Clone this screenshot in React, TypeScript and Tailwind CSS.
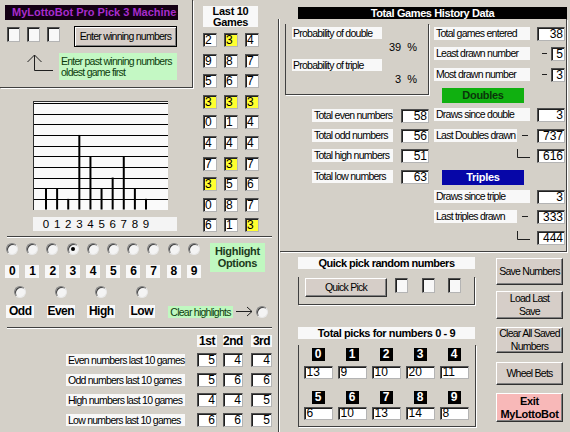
import React from "react";

const BASEF = "font-['Liberation_Sans',Arial,sans-serif] text-[10.5px] tracking-[-0.75px]";
const BOLDF = "font-['Liberation_Sans',Arial,sans-serif] font-bold";
const SUNKEN =
  "border border-t-[#505050] border-l-[#505050] border-r-[#b4b4b4] border-b-[#b4b4b4] shadow-[inset_1px_1px_0_#202020]";
const BTN =
  "bg-[#d6cec8] border border-t-white border-l-white border-r-[#303030] border-b-[#303030] shadow-[inset_-1px_-1px_0_#808080] flex flex-col items-center justify-center text-center leading-[13px]";
const LBL = "bg-[#f8f8f8]";
const FRAME3 = "border-l border-r border-b border-[#404040] shadow-[1px_1px_0_#ffffff]";

function Radio({ checked = false }: { checked?: boolean }) {
  return (
    <div className="w-[12px] h-[12px] shrink-0 rounded-full bg-[#f4f4f4] border border-t-[#808080] border-l-[#808080] border-r-[#e8e8e8] border-b-[#e8e8e8] shadow-[inset_1px_1px_0_#404040] flex items-center justify-center">
      {checked && <div className="w-[4px] h-[4px] rounded-full bg-black" />}
    </div>
  );
}

const last10 = [
  [2, 3, 4],
  [9, 8, 7],
  [5, 6, 7],
  [3, 3, 3],
  [0, 1, 4],
  [4, 4, 4],
  [7, 3, 7],
  [3, 5, 6],
  [0, 8, 7],
  [6, 1, 3],
];
const counts = [2, 2, 1, 7, 5, 2, 3, 5, 2, 1];

function Chart() {
  const base = 107.5;
  const unit = 10.65;
  return (
    <svg width="134" height="108" className="block">
      {Array.from({ length: 10 }).map((_, k) => {
        const y = Math.round(base - unit * (k + 1)) + 0.5;
        return <line key={k} x1="0" x2="134" y1={y} y2={y} stroke="#000" strokeWidth="1" />;
      })}
      {counts.map((c, i) => {
        const x = 12 + i * 11.11;
        return <line key={i} x1={x} x2={x} y1={base} y2={base - c * unit} stroke="#000" strokeWidth="2" />;
      })}
    </svg>
  );
}

function Val({ v, w, align = "right" }: { v: string | number; w: string; align?: string }) {
  return (
    <div
      className={`${w} h-[14px] shrink-0 bg-white ${SUNKEN} text-[12px] leading-[12px] tracking-normal ${
        align === "right" ? "text-right pr-[1px]" : "text-left pl-[2px]"
      }`}
    >
      {v}
    </div>
  );
}

function Dash({ ml, w }: { ml: string; w: string }) {
  return <div className={`${ml} ${w} mt-[6px] h-px bg-[#202020] shrink-0`} />;
}

function Corner() {
  return (
    <svg width="14" height="14" className="block shrink-0">
      <line x1="0.5" y1="0" x2="0.5" y2="8.5" stroke="#202020" strokeWidth="1" />
      <line x1="0.5" y1="8.5" x2="13" y2="8.5" stroke="#202020" strokeWidth="1" />
    </svg>
  );
}

const BOLDLBL = `${LBL} ${BOLDF} text-[12px] leading-[13px] text-center tracking-[-0.5px]`;

export default function App() {
  return (
    <div className={`w-[570px] h-[432px] bg-[#d4d0c8] flex overflow-hidden text-black ${BASEF} leading-[13px]`}>
      {/* LEFT COLUMN */}
      <div className="w-[278px] shrink-0 flex flex-col">
        <div className="flex h-[236px] shrink-0">
          <div className="w-[194px] shrink-0 flex flex-col">
            <div className="w-[193px] h-[88px] border-r border-b border-[#404040] shadow-[1px_1px_0_#ffffff] flex flex-col">
              <div
                className={`mt-[5px] ml-[5px] w-[173px] h-[15px] bg-[#140014] text-[#a82ccc] ${BOLDF} text-[11px] leading-[15px] tracking-normal pl-[7px] whitespace-nowrap`}
              >
                MyLottoBot Pro Pick 3 Machine
              </div>
              <div className="mt-[6px] ml-[7px] flex items-start">
                <div className={`mt-[1px] w-[13px] h-[15px] bg-[#f8f8f8] ${SUNKEN}`} />
                <div className={`mt-[1px] ml-[7px] w-[13px] h-[15px] bg-[#f8f8f8] ${SUNKEN}`} />
                <div className={`mt-[1px] ml-[7px] w-[13px] h-[15px] bg-[#f8f8f8] ${SUNKEN}`} />
                <div className="ml-[14px] w-[103px] h-[21px] bg-[#d6cec8] border border-black shadow-[inset_1px_1px_0_#ffffff,inset_-1px_-1px_0_#808080] flex items-center justify-center whitespace-nowrap">
                  Enter winning numbers
                </div>
              </div>
              <div className="mt-[6px] flex">
                <svg width="59" height="27" className="block shrink-0">
                  <polyline points="27.5,9 34.5,2 41.5,9" fill="none" stroke="#202020" strokeWidth="1" />
                  <polyline points="34.5,2 34.5,17.5 53,17.5" fill="none" stroke="#202020" strokeWidth="1" />
                </svg>
                <div className="w-[118px] h-[27px] bg-[#c4f8c4] text-[#0c3c0c] pl-[2px] pt-[3px] leading-[10.5px] whitespace-nowrap">
                  <div>Enter past winning numbers</div>
                  <div>oldest game first</div>
                </div>
              </div>
            </div>
            <div className="mt-[13px] ml-[33px] w-[135px] h-[109px] bg-[#fafafa] border-l border-t border-[#303030]">
              <Chart />
            </div>
            <div className="mt-[7px] ml-[33px] w-[144px] h-[14px] bg-[#f4f4f4] flex pl-[7.5px]">
              {Array.from({ length: 10 }).map((_, i) => (
                <span key={i} className="w-[11.11px] text-center text-[11.5px] tracking-normal leading-[14px]">
                  {i}
                </span>
              ))}
            </div>
          </div>
          <div className="ml-[9px] flex flex-col">
            <div className={`mt-[6px] w-[55px] h-[21px] ${LBL} ${BOLDF} text-[11px] leading-[10.5px] tracking-[-0.3px] text-center`}>
              <div>Last 10</div>
              <div>Games</div>
            </div>
            <div className="mt-[6px] flex flex-col gap-[6.6px]">
              {last10.map((r, ri) => (
                <div key={ri} className="flex gap-[7px]">
                  {r.map((v, ci) => (
                    <div
                      key={ci}
                      className={`w-[14px] h-[14px] ${SUNKEN} ${
                        v === 3 ? "bg-[#ffff30]" : "bg-white"
                      } text-[12px] leading-[12px] tracking-normal pl-[1px]`}
                    >
                      {v}
                    </div>
                  ))}
                </div>
              ))}
            </div>
          </div>
        </div>

        <div className="ml-[7px] w-[265px] h-px shrink-0 bg-[#404040] shadow-[0_1px_0_#ffffff]" />

        <div className="mt-[6px] flex">
          <div className="ml-[2px] grid grid-cols-[repeat(10,20.2px)] grid-rows-[12px_13px] gap-y-[10px] justify-items-center">
            {Array.from({ length: 10 }).map((_, i) => (
              <Radio key={"r" + i} checked={i === 3} />
            ))}
            {Array.from({ length: 10 }).map((_, i) => (
              <div key={"l" + i} className={`w-[14px] h-[13px] ${BOLDLBL}`}>
                {i}
              </div>
            ))}
          </div>
          <div
            className={`ml-[6px] w-[55px] h-[29px] bg-[#c0f8c0] text-[#1c3a1c] ${BOLDF} text-[11px] leading-[12px] pt-[2px] text-center tracking-[-0.3px]`}
          >
            <div>Highlight</div>
            <div>Options</div>
          </div>
        </div>

        <div className="mt-[8px] grid grid-cols-[repeat(4,40.5px)] justify-items-center w-[162px]">
          <Radio />
          <Radio />
          <Radio />
          <Radio />
        </div>
        <div className="mt-[7px] flex items-center h-[13px]">
          <div className="grid grid-cols-[repeat(4,40.5px)] justify-items-center">
            <div className={`w-[28px] h-[13px] ${BOLDLBL}`}>Odd</div>
            <div className={`w-[28px] h-[13px] ${BOLDLBL}`}>Even</div>
            <div className={`w-[28px] h-[13px] ${BOLDLBL}`}>High</div>
            <div className={`w-[26px] h-[13px] ${BOLDLBL}`}>Low</div>
          </div>
          <div className="ml-[6px] w-[65px] h-[12px] bg-[#c0f8c0] text-[#0c3c0c] leading-[12px] text-center whitespace-nowrap">
            Clear highlights
          </div>
          <svg width="18" height="13" className="ml-[2px] block shrink-0">
            <line x1="1" y1="6.5" x2="17" y2="6.5" stroke="#202020" strokeWidth="1" />
            <polyline points="12,2 17,6.5 12,11" fill="none" stroke="#202020" strokeWidth="1" />
          </svg>
          <div className="ml-[3px]">
            <Radio />
          </div>
        </div>

        <div className="mt-[9px] ml-[7px] w-[265px] h-px shrink-0 bg-[#404040] shadow-[0_1px_0_#ffffff]" />

        <div className="mt-[7px] flex">
          <div className={`ml-[197px] w-[20px] h-[12px] ${BOLDLBL} leading-[12px]`}>1st</div>
          <div className={`ml-[6px] w-[20px] h-[12px] ${BOLDLBL} leading-[12px]`}>2nd</div>
          <div className={`ml-[8px] w-[21px] h-[12px] ${BOLDLBL} leading-[12px]`}>3rd</div>
        </div>
        <div className="mt-[6px] flex flex-col gap-[6px]">
          {[
            ["Even numbers last 10 games", 5, 4, 4],
            ["Odd numbers last 10 games", 5, 6, 6],
            ["High numbers last 10 games", 4, 4, 5],
            ["Low numbers last 10 games", 6, 6, 5],
          ].map((r, i) => (
            <div key={i} className="flex items-center">
              <div className={`ml-[66px] w-[119px] h-[12px] ${LBL} pl-[2px] leading-[12px] whitespace-nowrap`}>{r[0]}</div>
              <div className="ml-[12px]">
                <Val v={r[1]} w="w-[20px]" />
              </div>
              <div className="ml-[6px]">
                <Val v={r[2]} w="w-[20px]" />
              </div>
              <div className="ml-[8px]">
                <Val v={r[3]} w="w-[21px]" />
              </div>
            </div>
          ))}
        </div>
      </div>

      {/* DIVIDER */}
      <div className="w-px shrink-0 mt-[19px] bg-[#404040]" />
      <div className="w-px shrink-0 mt-[19px] bg-white" />

      {/* RIGHT COLUMN */}
      <div className="w-[290px] shrink-0 flex flex-col">
        <div
          className={`mt-[7px] ml-[18px] w-[269px] h-[12px] bg-black text-white ${BOLDF} text-[11px] leading-[12px] text-center tracking-[-0.4px]`}
        >
          Total Games History Data
        </div>
        <div className="w-[287px] h-[233px] shrink-0 border-r border-b border-[#404040] shadow-[1px_1px_0_#ffffff] flex">
          {/* left sub */}
          <div className="w-[150px] shrink-0 flex flex-col">
            <div className={`mt-[5px] ml-[5px] w-[144px] h-[71px] ${FRAME3} flex flex-col pt-[3px]`}>
              <div className={`ml-[6px] w-[90px] h-[12px] ${LBL} pl-[1px] leading-[12px] whitespace-nowrap`}>Probability of double</div>
              <div className="mt-[1px] h-[14px] flex justify-end items-center pr-[11px] text-[11px] tracking-normal">
                <span>39</span>
                <span className="ml-[6px]">%</span>
              </div>
              <div className={`mt-[5px] ml-[6px] w-[90px] h-[12px] ${LBL} pl-[1px] leading-[12px] whitespace-nowrap`}>Probability of triple</div>
              <div className="mt-[1px] h-[14px] flex justify-end items-center pr-[11px] text-[11px] tracking-normal">
                <span>3</span>
                <span className="ml-[6px]">%</span>
              </div>
            </div>
            <div className="mt-[13.6px] flex flex-col">
              {[
                ["Total even numbers", 58],
                ["Total odd numbers", 56],
                ["Total high numbers", 51],
                ["Total low numbers", 63],
              ].map((r, i) => (
                <div key={i} className="h-[20.4px] flex items-start">
                  <div className={`ml-[32px] w-[81px] h-[13px] ${LBL} pl-[2px] leading-[13px] whitespace-nowrap`}>{r[0]}</div>
                  <div className="ml-[8px]">
                    <Val v={r[1]} w="w-[28px]" />
                  </div>
                </div>
              ))}
            </div>
          </div>
          {/* right sub */}
          <div className="ml-[4px] w-[132px] shrink-0 flex flex-col pt-[8px]">
            <div className="h-[20.4px] flex items-start">
              <div className={`w-[96px] h-[13px] ${LBL} pl-[2px] leading-[13px] whitespace-nowrap`}>Total games entered</div>
              <div className="ml-[7px]"><Val v={38} w="w-[28px]" /></div>
            </div>
            <div className="h-[20.4px] flex items-start">
              <div className={`w-[96px] h-[13px] ${LBL} pl-[2px] leading-[13px] whitespace-nowrap`}>Least drawn number</div>
              <Dash ml="ml-[12px]" w="w-[5px]" />
              <div className="ml-[4px]"><Val v={5} w="w-[14px]" /></div>
            </div>
            <div className="h-[20.4px] flex items-start">
              <div className={`w-[96px] h-[13px] ${LBL} pl-[2px] leading-[13px] whitespace-nowrap`}>Most drawn number</div>
              <Dash ml="ml-[12px]" w="w-[5px]" />
              <div className="ml-[4px]"><Val v={3} w="w-[14px]" /></div>
            </div>
            <div className="h-[20.4px] flex items-start">
              <div className={`ml-[8px] w-[82px] h-[15px] bg-[#10b010] text-[#0a360a] ${BOLDF} text-[11px] leading-[15px] text-center tracking-[-0.3px]`}>
                Doubles
              </div>
            </div>
            <div className="h-[20.4px] flex items-start">
              <div className={`w-[96px] h-[13px] ${LBL} pl-[2px] leading-[13px] whitespace-nowrap`}>Draws since double</div>
              <div className="ml-[7px]"><Val v={3} w="w-[28px]" /></div>
            </div>
            <div className="h-[20.4px] flex items-start">
              <div className={`w-[83px] h-[13px] ${LBL} pl-[2px] leading-[13px] whitespace-nowrap`}>Last Doubles drawn</div>
              <Dash ml="ml-[5px]" w="w-[6px]" />
              <div className="ml-[9px]"><Val v={737} w="w-[28px]" /></div>
            </div>
            <div className="h-[20.4px] flex items-start">
              <div className="ml-[83px]"><Corner /></div>
              <div className="ml-[6px]"><Val v={616} w="w-[28px]" /></div>
            </div>
            <div className="h-[20.4px] flex items-start">
              <div className={`ml-[8px] w-[82px] h-[15px] bg-[#0606a8] text-white ${BOLDF} text-[11px] leading-[15px] text-center tracking-[-0.3px]`}>
                Triples
              </div>
            </div>
            <div className="h-[20.4px] flex items-start">
              <div className={`w-[96px] h-[13px] ${LBL} pl-[2px] leading-[13px] whitespace-nowrap`}>Draws since triple</div>
              <div className="ml-[7px]"><Val v={3} w="w-[28px]" /></div>
            </div>
            <div className="h-[20.4px] flex items-start">
              <div className={`w-[83px] h-[13px] ${LBL} pl-[2px] leading-[13px] whitespace-nowrap`}>Last triples drawn</div>
              <Dash ml="ml-[5px]" w="w-[6px]" />
              <div className="ml-[9px]"><Val v={333} w="w-[28px]" /></div>
            </div>
            <div className="h-[20.4px] flex items-start">
              <div className="ml-[83px]"><Corner /></div>
              <div className="ml-[6px]"><Val v={444} w="w-[28px]" /></div>
            </div>
          </div>
        </div>

        {/* lower right */}
        <div className="flex">
          <div className="w-[216px] shrink-0 flex flex-col">
            <div className={`mt-[5px] ml-[18px] w-[177px] h-[12px] ${LBL} ${BOLDF} text-[11px] leading-[12px] text-center tracking-[-0.5px]`}>
              Quick pick random numbers
            </div>
            <div className={`mt-[8px] ml-[18px] w-[177px] h-[28px] ${FRAME3} flex items-start`}>
              <div className={`ml-[6px] mt-[1px] w-[82px] h-[19px] ${BTN}`}>Quick Pick</div>
              <div className={`ml-[8px] mt-[1px] w-[13px] h-[15px] bg-[#f8f8f8] ${SUNKEN}`} />
              <div className={`ml-[14px] mt-[1px] w-[13px] h-[15px] bg-[#f8f8f8] ${SUNKEN}`} />
              <div className={`ml-[13px] mt-[1px] w-[13px] h-[15px] bg-[#f8f8f8] ${SUNKEN}`} />
            </div>
            <div className={`mt-[22px] ml-[18px] w-[177px] h-[12px] ${LBL} ${BOLDF} text-[11px] leading-[12px] text-center tracking-[-0.4px]`}>
              Total picks for numbers 0 - 9
            </div>
            <div className={`mt-[6px] ml-[18px] w-[178px] h-[82px] ${FRAME3} flex flex-col pl-[2px] pt-[3px]`}>
              {[
                [0, [13, 9, 10, 20, 11]],
                [5, [6, 10, 13, 14, 8]],
              ].map(([start, vals], gi) => (
                <React.Fragment key={gi}>
                  <div className={`${gi === 0 ? "" : "mt-[12px]"} grid grid-cols-[repeat(5,34px)] justify-items-center`}>
                    {(vals as number[]).map((_, i) => (
                      <div
                        key={i}
                        className={`w-[13px] h-[13px] bg-black text-white ${BOLDF} text-[12px] leading-[13px] tracking-normal text-center`}
                      >
                        {(start as number) + i}
                      </div>
                    ))}
                  </div>
                  <div className={`${gi === 0 ? "mt-[5px]" : "mt-[3px]"} grid grid-cols-[repeat(5,34px)] justify-items-center`}>
                    {(vals as number[]).map((v, i) => (
                      <div
                        key={i}
                        className={`w-[29px] h-[13px] bg-white ${SUNKEN} text-[12px] leading-[11px] tracking-normal pl-[2px]`}
                      >
                        {v}
                      </div>
                    ))}
                  </div>
                </React.Fragment>
              ))}
            </div>
          </div>
          <div className="w-[67px] shrink-0 flex flex-col">
            <div className={`mt-[6px] h-[27px] ${BTN} whitespace-nowrap`}>Save Numbers</div>
            <div className={`mt-[6px] h-[28px] ${BTN}`}>
              <div>Load Last</div>
              <div>Save</div>
            </div>
            <div className={`mt-[8px] h-[26px] ${BTN} whitespace-nowrap leading-[12px]`}>
              <div>Clear All Saved</div>
              <div>Numbers</div>
            </div>
            <div className={`mt-[9px] h-[23px] ${BTN}`}>Wheel Bets</div>
            <div className={`mt-[8px] h-[29px] ${BTN} bg-[#f8b8b8] ${BOLDF} text-[11px] leading-[12px] tracking-[-0.3px]`}>
              <div>Exit</div>
              <div>MyLottoBot</div>
            </div>
          </div>
        </div>
      </div>
    </div>
  );
}
